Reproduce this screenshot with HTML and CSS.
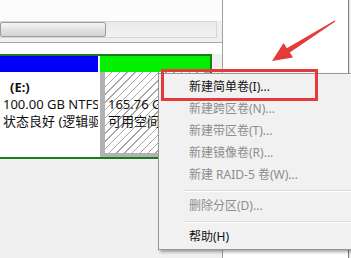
FILE: index.html
```html
<!DOCTYPE html>
<html lang="zh-CN">
<head>
<meta charset="utf-8">
<title>磁盘管理</title>
<link rel="stylesheet" href="styles.css">
</head>
<body>
<div class="screen">
  <div class="left">
    <div class="top-space"></div>
    <div class="hscroll"><div class="thumb"></div></div>
    <div class="rule"></div>
    <div class="pad-white"></div>
    <div class="disk-row">
      <div class="disk">
        <div class="part part-e">
          <div class="bar blue"></div>
          <div class="part-body">
            <div class="line label">(E:)</div>
            <div class="line">100.00 GB NTFS</div>
            <div class="line">状态良好 (逻辑驱</div>
          </div>
        </div>
        <div class="part part-free">
          <div class="bar green"></div>
          <div class="part-body hatched">
            <div class="line"></div>
            <div class="line">165.76 GB</div>
            <div class="line">可用空间</div>
          </div>
        </div>
      </div>
    </div>
    <div class="under"></div>
  </div>
  <div class="right"></div>
  <div class="edge"></div>
</div>

<svg class="arrow" width="351" height="258" viewBox="0 0 351 258">
  <polygon points="272,61 293,57.5 289.8,52.6 335.3,21.4 334.7,20.6 286.8,48.2 283.6,43" fill="#e53a3a"/>
</svg>

<div class="menu">
  <div class="item">新建简单卷(I)...</div>
  <div class="item disabled">新建跨区卷(N)...</div>
  <div class="item disabled">新建带区卷(T)...</div>
  <div class="item disabled">新建镜像卷(R)...</div>
  <div class="item disabled">新建 RAID-5 卷(W)...</div>
  <div class="sep"><span></span></div>
  <div class="item disabled">删除分区(D)...</div>
  <div class="sep"><span></span></div>
  <div class="item">帮助(H)</div>
</div>

<div class="highlight"></div>
</body>
</html>
```

FILE: styles.css
```css
html, body {
  margin: 0;
  padding: 0;
}
body {
  width: 351px;
  height: 258px;
  overflow: hidden;
  position: relative;
  background: #f0f0f0;
  font-family: "Noto Sans", "Noto Sans CJK SC", sans-serif;
}
.screen {
  display: flex;
  height: 258px;
}
.left {
  width: 223px;
  box-sizing: border-box;
  border-right: 1px solid #a0a0a0;
  display: flex;
  flex-direction: column;
  background: #f0f0f0;
}
.top-space {
  height: 21px;
  background: #fcfcfc;
}
.hscroll {
  width: 217px;
  height: 17px;
  box-sizing: border-box;
  background: linear-gradient(#e9e9e9, #f3f3f3);
  border: 1px solid #d6d6d6;
  border-left: none;
}
.thumb {
  width: 106px;
  height: 15px;
  box-sizing: border-box;
  border: 1px solid #9c9c9c;
  border-radius: 2px;
  background: linear-gradient(#f6f6f6, #e0e0e0 55%, #d4d4d4);
}
.rule {
  height: 4px;
  border-bottom: 1px solid #a7a7a7;
  background: #f0f0f0;
}
.pad-white {
  height: 11px;
  background: #fff;
}
.disk-row {
  display: flex;
  background: #f0f0f0;
}
.disk {
  width: 212px;
  box-sizing: border-box;
  border-top: 2px solid #1d7a1d;
  border-bottom: 2px solid #1d7a1d;
  border-right: 2px solid #1d7a1d;
  display: flex;
  gap: 2px;
  background: #fff;
}
.part {
  display: flex;
  flex-direction: column;
  height: 101px;
  overflow: hidden;
}
.part-e {
  width: 98px;
}
.part-free {
  flex: 1;
}
.bar {
  height: 16px;
  flex: none;
}
.blue {
  background: #0000fa;
}
.green {
  background: #00f000;
}
.part-body {
  flex: 1;
  box-sizing: border-box;
  padding: 7px 0 0 3px;
  font-size: 13px;
  line-height: 17px;
  color: #111;
  white-space: nowrap;
  overflow: hidden;
  background: #fff;
}
.part-body.hatched {
  border-left: 5px solid #b2b2b2;
  border-right: 4px solid #b2b2b2;
  border-bottom: 4px solid #b2b2b2;
  background: repeating-linear-gradient(135deg, #ffffff 0px, #ffffff 4.5px, #a8a8a8 4.5px, #a8a8a8 5.5px);
}
.line {
  height: 17px;
  overflow: hidden;
}
.label {
  font-weight: bold;
  padding-left: 7px;
}
.under {
  flex: 1;
  background: #f0f0f0;
}
.right {
  width: 126px;
  box-sizing: border-box;
  border-right: 1px solid #7c7c7c;
  background: #fff;
}
.edge {
  flex: 1;
  background: #ececec;
}
.arrow {
  position: absolute;
  left: 0;
  top: 0;
}
.menu {
  position: absolute;
  left: 158px;
  top: 73px;
  width: 210px;
  box-sizing: border-box;
  background: #f1f1f1;
  border: 1px solid #979797;
  padding: 2px 0 1px 0;
  box-shadow: 2px 2px 3px rgba(0, 0, 0, 0.35);
}
.item {
  height: 22px;
  line-height: 22px;
  padding-left: 30px;
  font-size: 12px;
  color: #111;
  white-space: nowrap;
}
.item.disabled {
  color: #8d8d8d;
}
.sep {
  height: 9px;
  padding-left: 25px;
  box-sizing: border-box;
  padding-top: 4px;
}
.sep span {
  display: block;
  height: 1px;
  border-bottom: 1px solid #ffffff;
  background: #dcdcdc;
}
.highlight {
  position: absolute;
  left: 161px;
  top: 69px;
  width: 157px;
  height: 32px;
  box-sizing: border-box;
  border: 3px solid #e53a3a;
}
```
